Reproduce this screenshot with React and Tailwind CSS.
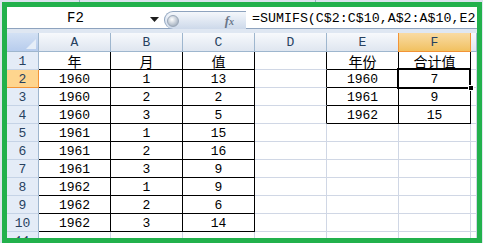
import React from "react";

const COLS = ["A", "B", "C", "D", "E", "F", "G"];
const DATA = [
  ["年", "月", "值", "", "年份", "合计值", ""],
  ["1960", "1", "13", "", "1960", "7", ""],
  ["1960", "2", "2", "", "1961", "9", ""],
  ["1960", "3", "5", "", "1962", "15", ""],
  ["1961", "1", "15", "", "", "", ""],
  ["1961", "2", "16", "", "", "", ""],
  ["1961", "3", "9", "", "", "", ""],
  ["1962", "1", "9", "", "", "", ""],
  ["1962", "2", "6", "", "", "", ""],
  ["1962", "3", "14", "", "", "", ""],
  ["", "", "", "", "", "", ""],
];

function inTable(r, c) {
  if (r >= 1 && r <= 10 && c >= 0 && c <= 2) return true;
  if (r >= 1 && r <= 4 && c >= 4 && c <= 5) return true;
  return false;
}

function Cell({ r, c, text }) {
  const blackRight = inTable(r, c) || inTable(r, c + 1);
  const blackBottom = inTable(r, c) || inTable(r + 1, c);
  const cjk = r === 1;
  return (
    <div
      className={[
        "h-full box-border border-r border-b flex justify-center",
        c === 6 ? "flex-1" : "w-[72px] shrink-0",
        blackRight ? "border-r-black" : "border-r-[#d0d7e5]",
        blackBottom ? "border-b-black" : "border-b-[#d0d7e5]",
        cjk
          ? "items-center text-[14px] leading-[16px] font-['Noto_Sans_CJK_SC',sans-serif]"
          : "items-end pb-[1px] text-[13px] leading-[13px] font-['Liberation_Mono',monospace]",
      ].join(" ")}
    >
      <span className="text-black">{text}</span>
    </div>
  );
}

function Row({ r }) {
  const sel = r === 2;
  return (
    <div className="flex h-[18px] shrink-0">
      <div
        className={[
          "w-[32px] shrink-0 h-full box-border border-r border-b flex items-end justify-center pb-[1px] text-[13px] leading-[13px] font-['Liberation_Mono',monospace] text-[#27415f]",
          sel
            ? "bg-[#fed58e] border-r-[#f29436] border-b-[#f29436]"
            : "bg-[#e4ecf7] border-r-[#9eb6ce] border-b-[#c5d3e6]",
        ].join(" ")}
      >
        {r}
      </div>
      {DATA[r - 1].map((t, c) => (
        <Cell key={c} r={r} c={c} text={t} />
      ))}
    </div>
  );
}

export default function App() {
  return (
    <div className="relative w-[483px] h-[243px] overflow-hidden bg-[#dfe6ef]">
      <div className="flex h-[2px] bg-[#dbe3ed]">
        <div className="w-[80px] border-r border-[#9aaac0]" />
        <div className="w-[236px] border-r border-[#9aaac0]" />
      </div>
      <div className="ml-[2px] w-[480px] h-[241px] box-border border-[5px] border-[#22b14c] bg-white flex flex-col overflow-hidden">
        {/* formula bar */}
        <div className="flex h-[22px] shrink-0 box-border border-b border-[#8ea3be] bg-white">
          <div className="w-[137px] shrink-0 flex items-center justify-center pt-[2px] text-[14px] font-['Liberation_Mono',monospace] text-black">
            F2
          </div>
          <div className="w-[20px] shrink-0 flex items-center justify-center pt-[4px]">
            <svg width="9" height="5" viewBox="0 0 9 5">
              <path d="M0 0h9L4.5 5z" fill="#1e1e1e" />
            </svg>
          </div>
          <div className="w-[82px] shrink-0 mt-[4px] h-[18px] rounded-l-[9px] border-t border-l border-[#8ea3be] bg-gradient-to-b from-[#f4f7fb] to-[#cdd9ea] flex items-center relative">
            <div className="ml-[2px] w-[12px] h-[12px] rounded-full bg-[radial-gradient(circle_at_40%_35%,#ffffff,#b9c3cf_60%,#8d99a8)] border border-[#9aa7b8]" />
            <span className="ml-auto mr-[12px] italic font-bold text-[13px] font-['Liberation_Serif',serif] text-[#6a7688]">
              f<span className="text-[10px]">x</span>
            </span>
          </div>
          <div className="flex-1 overflow-hidden whitespace-nowrap flex items-end pl-[6px] pb-[1px] text-[13.3px] leading-[16px] font-['Liberation_Mono',monospace] text-black">
            =SUMIFS(C$2:C$10,A$2:A$10,E2
          </div>
        </div>
        {/* band */}
        <div className="h-[4px] shrink-0 bg-[#dfe7f2]" />
        {/* column headers */}
        <div className="flex h-[19px] shrink-0">
          <div className="w-[32px] shrink-0 h-full box-border border-r border-b border-[#9eb6ce] bg-gradient-to-b from-[#d3e1f4] to-[#b7cced] relative">
            <svg className="absolute right-[2px] bottom-[2px]" width="10" height="10" viewBox="0 0 10 10">
              <path d="M10 0V10H0z" fill="#e6eef8" />
            </svg>
          </div>
          {COLS.map((c) => (
            <div
              key={c}
              className={[
                "h-full box-border border-r border-b flex items-center justify-center pt-[1px] text-[13px] font-['Liberation_Mono',monospace] text-[#27415f]",
                c === "G" ? "flex-1" : "w-[72px] shrink-0",
                c === "F"
                  ? "bg-gradient-to-b from-[#f9dba3] to-[#f1c15f] border-[#f29436] border-l -ml-[1px] w-[73px]"
                  : "bg-gradient-to-b from-[#f7f9fc] to-[#dfe6f0] border-r-[#9eb6ce] border-b-[#9eb6ce]",
              ].join(" ")}
            >
              {c === "G" ? "" : c}
            </div>
          ))}
        </div>
        {Array.from({ length: 11 }, (_, i) => (
          <Row key={i} r={i + 1} />
        ))}
      </div>
      {/* selection */}
      <div className="absolute left-[397px] top-[68px] w-[74px] h-[21px] border-2 border-black pointer-events-none" />
      <div className="absolute left-[468px] top-[85px] w-[6px] h-[6px] bg-black border border-white pointer-events-none" />
    </div>
  );
}
